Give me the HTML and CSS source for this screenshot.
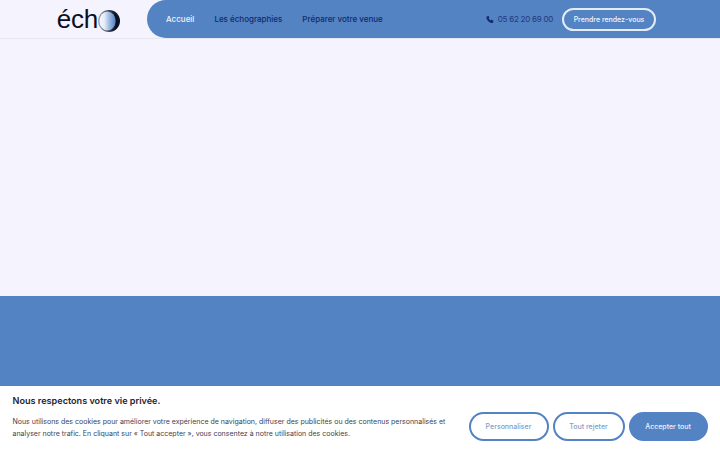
FILE: index.html
```html
<!DOCTYPE html>
<html lang="fr">
<head>
    <meta charset="UTF-8">
    <meta name="viewport" content="width=device-width, initial-scale=1.0">
    <title>Écho</title>
    <link rel="stylesheet" href="styles.css">
</head>
<body>
    <header class="entete">
        <a class="logo" href="#">
            <span class="logo-texte">éch</span>
            <svg class="logo-o" width="22" height="22" viewBox="0 0 23 23">
                <defs>
                    <linearGradient id="anneau" x1="0" x2="1" y1="0" y2="0">
                        <stop offset="0" stop-color="#aab0bd"/>
                        <stop offset="0.5" stop-color="#3a4150"/>
                        <stop offset="0.8" stop-color="#0b1020"/>
                    </linearGradient>
                    <linearGradient id="lune" x1="0" x2="1" y1="0" y2="0">
                        <stop offset="0" stop-color="#f4f6fc"/>
                        <stop offset="0.3" stop-color="#e6edf8"/>
                        <stop offset="0.55" stop-color="#a9c3e6"/>
                        <stop offset="1" stop-color="#4f7fc0"/>
                    </linearGradient>
                </defs>
                <circle cx="11.5" cy="11.5" r="11.5" fill="url(#anneau)"/>
                <ellipse cx="10" cy="11.5" rx="8.500" ry="10" fill="url(#lune)"/>
            </svg>
        </a>
        <div class="barre">
            <nav class="menu">
                <a class="lien lien-actif" href="#">Accueil</a>
                <a class="lien" href="#">Les échographies</a>
                <a class="lien" href="#">Préparer votre venue</a>
            </nav>
            <div class="contact">
                <a class="telephone" href="#">
                    <svg width="8" height="9" viewBox="0 0 24 24" fill="#14286a">
                        <path d="M6.6 1.500 2.800 3.200C1.600 3.800 1 5 1.300 6.400c2 8.200 8 14.400 16.300 16.400 1.300.3 2.600-.3 3.200-1.500l1.700-3.800c.3-.7.1-1.500-.5-1.900l-4.300-2.800c-.6-.4-1.400-.3-1.900.2l-1.800 1.900c-2.700-1.400-4.900-3.600-6.200-6.300l1.900-1.700c.5-.5.6-1.300.2-1.900L7.900 2c-.3-.6-.7-.7-1.300-.5z"/>
                    </svg>
                    05 62 20 69 00
                </a>
                <a class="bouton-rdv" href="#">Prendre rendez-vous</a>
            </div>
        </div>
    </header>

    <main>
        <section class="hero"></section>
        <section class="bandeau"></section>
    </main>

    <div class="cookies">
        <div class="cookies-texte">
            <p class="cookies-titre">Nous respectons votre vie privée.</p>
            <p class="cookies-desc">Nous utilisons des cookies pour améliorer votre expérience de navigation, diffuser des publicités ou des contenus personnalisés et analyser notre trafic. En cliquant sur « Tout accepter », vous consentez à notre utilisation des cookies.</p>
        </div>
        <div class="cookies-boutons">
            <button class="bouton bouton-perso">Personnaliser</button>
            <button class="bouton bouton-rejet">Tout rejeter</button>
            <button class="bouton bouton-accepter">Accepter tout</button>
        </div>
    </div>
</body>
</html>
```

FILE: styles.css
```css
* {
    box-sizing: border-box;
}
html, body {
    height: 100%;
    overflow: hidden;
}
body {
    margin: 0;
    font-family: Inter, "Liberation Sans", sans-serif;
    background-color: #f4f3fe;
}
a {
    text-decoration: none;
}
.entete {
    display: flex;
    height: 39px;
    border-bottom: 1px solid #e6e6ee;
}
.logo {
    display: flex;
    align-items: center;
    justify-content: flex-end;
    width: 147px;
    padding: 0 27px 0 0;
    color: #0b1020;
}
.logo-texte {
    font-family: "Liberation Sans", Arial, sans-serif;
    font-size: 26px;
    line-height: 1;
    letter-spacing: -0.2px;
}
.logo-o {
    margin-top: 3px;
}
.barre {
    flex: 1;
    display: flex;
    align-items: center;
    justify-content: space-between;
    height: 38px;
    padding: 0 64px 0 19px;
    background-color: #5383c3;
    border-radius: 20px 0 0 20px;
}
.menu {
    display: flex;
    gap: 20px;
}
.lien {
    font-size: 8px;
    font-weight: 500;
    color: #14286a;
}
.lien-actif {
    color: #eef2fb;
}
.contact {
    display: flex;
    align-items: center;
    gap: 9px;
}
.telephone {
    display: flex;
    align-items: center;
    gap: 4px;
    font-size: 8px;
    letter-spacing: -0.25px;
    color: #24387c;
}
.bouton-rdv {
    display: flex;
    align-items: center;
    justify-content: center;
    width: 94px;
    height: 23px;
    font-size: 7px;
    font-weight: 500;
    color: #f4f6fc;
    border: 2px solid #e4ecf8;
    border-radius: 12px;
}
.hero {
    height: 257px;
}
.bandeau {
    height: 154px;
    background-color: #5383c3;
}
.cookies {
    position: fixed;
    left: 0;
    right: 0;
    bottom: 0;
    display: flex;
    align-items: flex-end;
    justify-content: space-between;
    height: 64px;
    padding: 9px 12.5px 9px;
    background-color: #fff;
}
.cookies-texte {
    align-self: flex-start;
    width: 440px;
}
.cookies-titre {
    margin: 0 0 10px;
    font-size: 9.1px;
    font-weight: 600;
    color: #1f2430;
}
.cookies-desc {
    margin: 0;
    font-size: 7px;
    line-height: 12px;
    color: #3c4250;
}
.cookies-boutons {
    display: flex;
    gap: 4px;
}
.bouton {
    height: 29px;
    padding: 0;
    font-family: Inter, "Liberation Sans", sans-serif;
    font-size: 7px;
    font-weight: 500;
    border: 2px solid #5383c3;
    border-radius: 15px;
    background-color: #fff;
    color: #7f9ccb;
}
.bouton-perso {
    width: 80px;
}
.bouton-rejet {
    width: 72px;
}
.bouton-accepter {
    width: 79px;
    background-color: #5383c3;
    color: #eef2fb;
}
```
